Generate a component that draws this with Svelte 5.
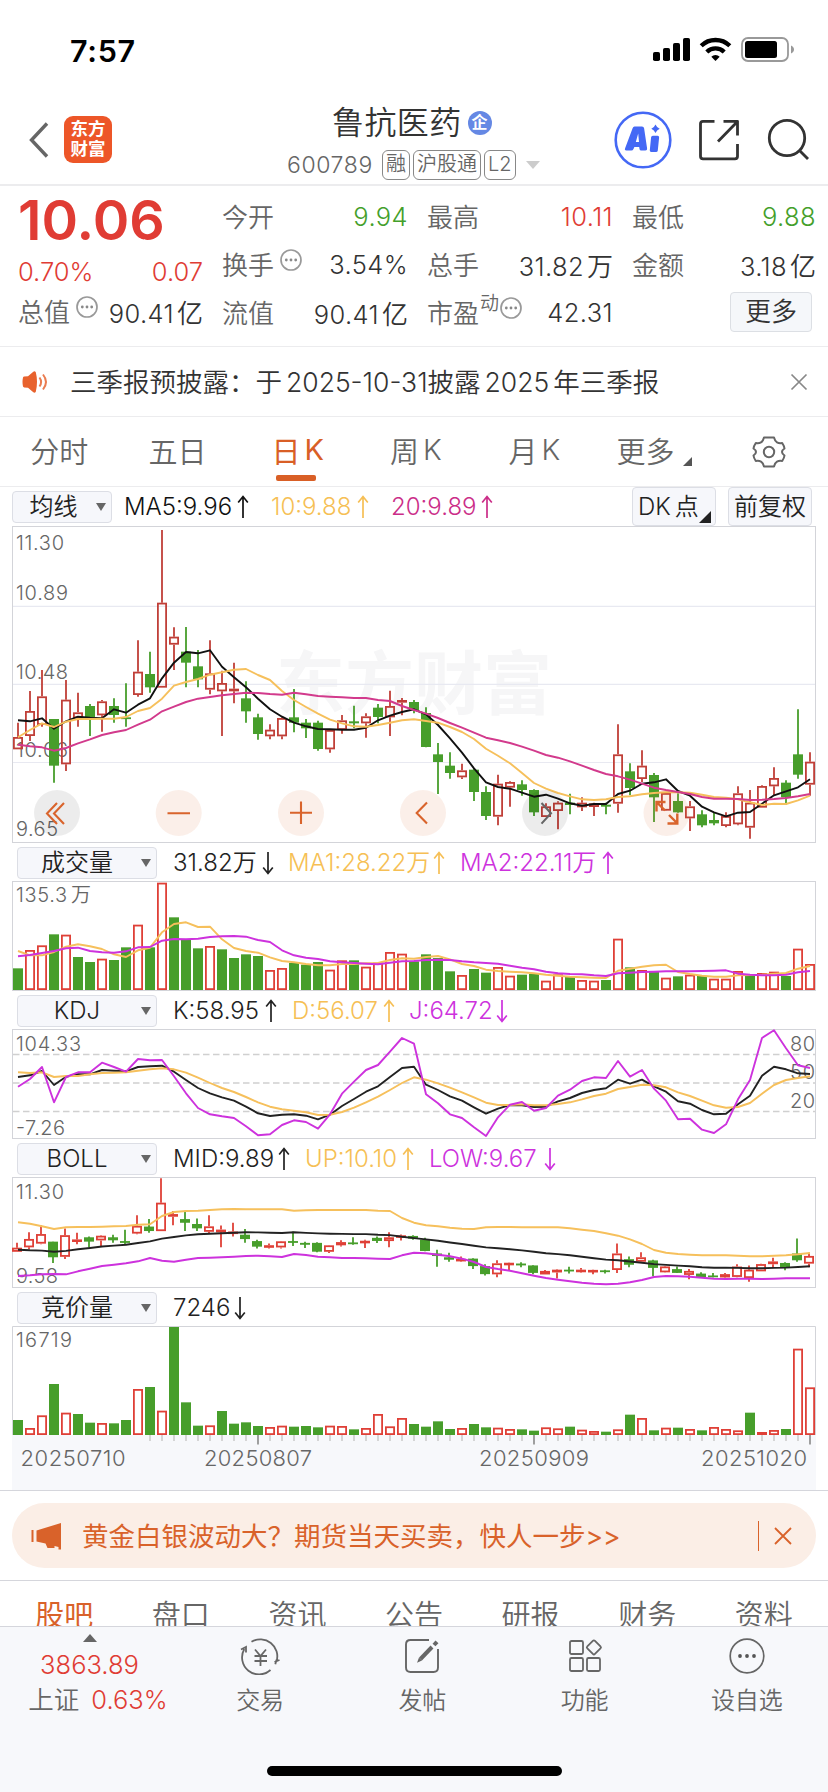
<script>
  const stats = [
    { label: '今开', value: '9.94', tone: 'down' },
    { label: '最高', value: '10.11', tone: 'up' },
    { label: '最低', value: '9.88', tone: 'down' },
    { label: '换手', value: '3.54%', info: true },
    { label: '总手', value: '31.82', unit: '万' },
    { label: '金额', value: '3.18', unit: '亿' },
    { label: '流值', value: '90.41', unit: '亿' },
    { label: '市盈', sup: '动', value: '42.31', info: true }
  ];

  const periods = ['分时', '五日', '日K', '周K', '月K', '更多'];
  const sections = ['股吧', '盘口', '资讯', '公告', '研报', '财务', '资料'];

  // w: width of the text column, gap: distance to the next reading
  const maReadings = [
    { text: 'MA5:9.96', dir: 'up', color: '#111', w: 113, gap: 22 },
    { text: '10:9.88', dir: 'up', color: '#f6bf55', w: 86, gap: 22 },
    { text: '20:9.89', dir: 'up', color: '#cb2d88', w: 90, gap: 0 }
  ];
  const volReadings = [
    { text: '31.82万', dir: 'down', color: '#222', w: 89, gap: 14 },
    { text: 'MA1:28.22万', dir: 'up', color: '#f6bf55', w: 145, gap: 15 },
    { text: 'MA2:22.11万', dir: 'up', color: '#cd32dd', w: 142, gap: 0 }
  ];
  const kdjReadings = [
    { text: 'K:58.95', dir: 'up', color: '#222', w: 92, gap: 15 },
    { text: 'D:56.07', dir: 'up', color: '#f6bf55', w: 91, gap: 14 },
    { text: 'J:64.72', dir: 'down', color: '#cd32dd', w: 87, gap: 0 }
  ];
  const bollReadings = [
    { text: 'MID:9.89', dir: 'up', color: '#222', w: 105, gap: 15 },
    { text: 'UP:10.10', dir: 'up', color: '#f6bf55', w: 97, gap: 15 },
    { text: 'LOW:9.67', dir: 'down', color: '#cd32dd', w: 115, gap: 0 }
  ];
  const aucReadings = [{ text: '7246', dir: 'down', color: '#222', w: 61, gap: 0 }];

  // direction, high, body top, body bottom, low
  const candles = `r 638 681 718 718|r 543 603 678 693|r 480 559 645 650|g 627 627 767 818|r 510 569 763 783|r 548 607 625 650|g 582 588 627 678|r 570 574 616 665|g 565 588 615 638|g 520 622 627 650|r 391 485 555 560|g 425 492 532 548|r 60 278 533 533|r 352 380 404 480|g 351 425 458 532|g 420 469 508 532|r 391 490 539 553|r 482 519 544 678|r 458 536 544 580|g 514 565 604 638|g 611 622 672 689|r 643 659 679 688|r 622 624 679 688|g 537 622 638 667|g 627 638 655 684|g 632 638 717 722|r 658 660 718 728|r 615 631 660 671|g 587 634 640 655|r 610 619 640 683|g 582 593 621 640|r 542 588 622 678|r 564 570 578 616|g 570 576 600 610|g 592 609 711 712|g 699 733 756 852|g 727 767 789 806|r 761 781 802 807|g 776 779 846 873|g 829 846 918 930|r 794 821 920 946|r 814 816 833 890|g 811 823 840 857|g 838 840 907 918|r 880 889 921 921|r 874 878 903 958|g 851 878 885 913|r 862 878 892 903|r 878 880 891 918|g 878 884 890 913|r 643 733 881 908|g 760 784 834 856|r 721 767 807 816|g 789 795 862 936|r 846 849 902 903|g 850 873 907 908|r 873 889 925 963|g 901 913 946 952|g 908 930 940 946|r 907 918 948 952|r 829 850 943 946|r 840 878 953 986|r 826 828 893 893|r 772 804 829 857|g 811 818 862 884|g 598 733 794 806|r 727 755 824 857`
    .split('|')
    .map((row) => {
      const [k, ...n] = row.split(' ');
      return { up: k === 'r', v: n.map(Number) };
    });

  const ma5 = [631,634,625,656,634,620,623,625,598,608,584,565,505,458,426,430,421,470,502,532,566,598,620,638,649,657,658,659,659,653,631,617,606,598,613,645,685,728,775,817,831,836,848,860,854,866,880,887,882,882,852,842,821,817,808,843,857,890,907,919,908,906,881,856,844,832,808];
  const ma10 = [682,660,640,651,635,627,627,626,626,621,603,594,566,527,516,507,494,487,479,477,495,510,543,570,591,611,629,640,649,650,645,638,631,628,633,638,651,666,687,716,737,760,789,819,836,849,859,868,870,868,861,859,853,849,847,847,848,854,861,863,868,877,885,881,882,871,857];
  const ma20 = [704,709,712,722,714,700,688,675,667,660,644,629,604,590,576,566,561,556,552,548,549,552,554,548,553,558,560,562,564,564,570,573,588,600,611,624,639,653,668,683,691,699,710,722,735,743,754,767,780,792,799,809,821,833,840,846,852,861,866,866,867,870,869,867,864,859,852];

  const parseBars = (s) => s.split(' ').map((t) => ({ up: t[0] === 'r', v: +t.slice(1) }));
  const volume = parseBars('g385 r330 r316 g283 r284 g351 g366 r356 g360 g322 r254 g322 r128 g232 g298 g325 r318 g328 g354 g343 g348 r390 r384 g369 g374 g366 r389 r361 g361 r380 r368 r336 r341 g364 g343 g354 g394 r405 g387 g398 r381 r407 g404 g402 r422 r403 g409 r420 r422 g420 r296 g382 r390 g396 r413 g409 r404 g408 r416 r416 r393 g404 r399 r395 g408 r326 r372');
  const auction = parseBars('g840 r864 r826 g732 r818 g822 g848 r849 g850 g840 r747 g741 r812 g561 g787 g857 r856 g813 g851 g847 g858 r861 r857 g860 g858 g862 r857 r858 g868 r864 r822 r859 r834 g852 g860 g844 g867 r864 g852 g862 r863 r867 g868 g872 r862 r865 g860 r869 r873 g875 r868 g824 r834 g871 r863 g863 r867 g871 r861 r867 r871 g818 r876 r870 g867 r626 r742');
  const vma1 = [333,346,346,336,320,313,319,327,343,351,331,323,277,252,247,261,260,298,324,333,338,352,363,367,372,376,376,372,372,370,369,360,355,356,351,348,358,372,378,389,393,395,397,400,404,407,410,412,413,414,392,386,380,376,374,396,402,407,410,410,406,405,404,401,399,386,378];
  const vma2 = [349,345,339,333,325,323,333,337,338,334,322,321,302,297,298,296,291,289,288,290,300,306,331,346,353,357,364,367,369,371,373,368,364,363,360,359,360,364,367,369,371,377,383,388,395,400,402,403,406,408,400,398,396,395,394,394,394,393,392,391,401,404,406,406,404,397,393];

  const kLine = [711,706,693,735,710,703,703,690,692,694,681,679,677,695,720,744,760,772,782,800,820,828,824,823,827,838,824,798,777,755,739,711,684,680,734,750,769,782,802,821,806,795,796,801,800,784,774,759,750,745,719,731,719,739,755,784,791,810,823,821,793,767,707,680,688,700,702];
  const dLine = [697,699,697,711,708,708,703,699,698,697,692,688,685,688,698,713,729,744,756,771,787,800,808,812,817,825,824,816,803,787,770,750,729,712,719,730,743,757,772,788,795,795,793,796,796,792,787,778,768,761,747,741,734,736,742,757,768,782,796,803,801,789,761,735,720,714,709];
  const jLine = [740,717,681,787,711,697,697,668,681,695,657,661,660,709,760,804,823,829,834,859,886,883,855,841,846,866,823,761,725,690,675,635,594,611,763,790,823,834,862,888,832,794,786,812,804,767,749,723,712,714,663,710,690,746,782,838,836,869,879,853,778,720,594,571,625,676,684];

  const bollUp = [247,251,259,267,262,261,261,260,259,258,254,253,228,216,213,212,210,208,207,208,208,208,208,212,211,210,210,210,210,210,212,213,234,248,256,259,263,266,267,262,261,261,262,262,262,262,265,269,273,280,287,298,312,330,338,342,344,346,346,346,347,349,349,347,346,343,339];
  const bollLow = [408,406,403,402,403,394,386,378,374,370,364,354,362,365,359,354,353,352,350,348,347,349,351,342,345,350,352,354,354,355,356,357,346,338,340,344,349,356,366,381,387,392,400,407,414,419,424,428,431,433,431,427,420,411,408,409,410,413,416,417,416,416,417,416,415,415,415];

  const cx = (i) => 18 + 12 * i;
  const toBoll = (v) => 188 + (v - 278) * 0.335;
  const line = (arr, off) => arr.map((v, i) => `${cx(i)},${(off + v / 3).toFixed(1)}`).join(' ');
  const bollMid = ma20.map((v) => toBoll(v) - 1.5);
  const bollCandles = candles.map((c) => ({ up: c.up, v: c.v.map(toBoll) }));
  const priceLabels = [['11.30', 549.5], ['10.89', 599.5], ['10.48', 678.5], ['10.06', 757], ['9.65', 836]];
</script>

{#snippet dots()}
  <svg class="dots" width="22" height="22" viewBox="0 0 22 22">
    <circle cx="11" cy="11" r="10" fill="none" stroke="#999" stroke-width="1.7" />
    <g fill="#888"><circle cx="6.3" cy="11" r="1.4" /><circle cx="11" cy="11" r="1.4" /><circle cx="15.7" cy="11" r="1.4" /></g>
  </svg>
{/snippet}

{#snippet readings(list)}
  {#each list as r}
    <span class="reading" style="color:{r.color};margin-right:{r.gap}px">
      <span class="rtext" style="width:{r.w}px">{r.text}</span>
      <svg width="12" height="24" viewBox="0 0 12 24" fill="none" stroke="currentColor" stroke-width="1.7">
        {#if r.dir === 'up'}
          <path d="M6 23V1.5M1.2 7.5 6 1.5l4.800 6" />
        {:else}
          <path d="M6 1v21.500M1.200 16.500 6 22.500l4.800-6" />
        {/if}
      </svg>
    </span>
  {/each}
{/snippet}

{#snippet indicatorBar(name, list)}
  <div class="indbar">
    <div class="select wide"><span>{name}</span><i></i></div>
    {@render readings(list)}
  </div>
{/snippet}

{#snippet candleSet(list, off, dx, up)}
  {#each list as c, i}
    {@const x = cx(i) + dx}
    {@const y = c.v.map((n) => off + n / 3)}
    {#if c.up}
      <path d="M{x} {y[0]}V{y[1]}M{x} {y[2]}V{y[3]}" stroke={up} stroke-width="1.8" fill="none" />
      <rect x={x - 4.1} y={y[1] + 0.9} width="8.2" height={Math.max(0.8, y[2] - y[1] - 1.8)} fill="none" stroke={up} stroke-width="1.8" />
    {:else}
      <path d="M{x} {y[0]}V{y[3]}" stroke="#479e2b" stroke-width="1.8" />
      <rect x={x - 5} y={y[1]} width="10" height={Math.max(1.8, y[2] - y[1])} fill="#479e2b" />
    {/if}
  {/each}
{/snippet}

{#snippet barSet(list, off, base)}
  {#each list as b, i}
    {@const y = off + b.v / 3}
    {#if b.up}
      <rect x={cx(i) - 4.1} y={y + 0.9} width="8.2" height={Math.max(0.8, base - y - 1.8)} fill="#fff" stroke="#df4037" stroke-width="1.8" />
    {:else}
      <rect x={cx(i) - 5} {y} width="10" height={base - y} fill="#479e2b" />
    {/if}
  {/each}
{/snippet}

<div class="screen">
  <div class="status">
    <span class="clock">7:57</span>
    <svg width="144" height="26" viewBox="652 37 144 26">
      <g>
        <rect x="653" y="52" width="7" height="9" rx="1.800" /><rect x="663" y="48" width="7" height="13" rx="1.800" />
        <rect x="673" y="43" width="7" height="18" rx="1.800" /><rect x="683" y="38" width="7" height="23" rx="1.800" />
      </g>
      <g fill="none" stroke="#000" stroke-width="4.300">
        <path d="M701.200 45.800a20.500 20.500 0 0 1 28.600 0" />
        <path d="M706.800 52a12.400 12.400 0 0 1 17.400 0" />
      </g>
      <path d="M715.500 61l-4.200-4.300a6 6 0 0 1 8.400 0z" />
      <rect x="742" y="38" width="46" height="23" rx="6" fill="none" stroke="#999" stroke-width="1.800" />
      <rect x="745" y="41" width="32" height="17" rx="2.500" />
      <path d="M791 45.500c4 1.500 4 6.500 0 8z" fill="#999" />
    </svg>
  </div>

  <header>
    <svg class="back" width="20" height="36" viewBox="0 0 20 36"><path d="M18 1.500 2.500 18 18 34.500" fill="none" stroke="#666" stroke-width="3.400" /></svg>
    <div class="logo"><span>东方</span><span>财富</span></div>
    <div class="title">
      <div class="name">鲁抗医药<b>企</b></div>
      <div class="code"><span>600789</span><em>融</em><em>沪股通</em><em>L2</em><i></i></div>
    </div>
    <svg class="tools" width="198" height="60" viewBox="612 110 198 60">
      <circle cx="642" cy="140" r="27.300" fill="none" stroke="#4468f5" stroke-width="2.600" />
      <path fill="#4468f5" fill-rule="evenodd" d="M633.500 126.500h7.500q1.800 0 2.100 1.800l3 20.200q.3 2-1.700 2h-4.200q-1.500 0-1.700-1.500l-.3-2h-4.800l-.9 2q-.7 1.500-2.200 1.500h-4.800q-2.300 0-1.400-2.200l7.500-20q.6-1.800 1.900-1.800zM637.200 133.500l-2.400 8.500h3.200z" />
      <path fill="#4468f5" d="M651.800 135.700h4.800q1.700 0 1.500 1.700l-1.300 13q-.2 1.600-1.800 1.600h-4.700q-1.700 0-1.500-1.700l1.300-13q.2-1.600 1.700-1.600zM654.500 124.500q1.200 3 4.200 4.200q-3 1.200-4.200 4.200q-1.200-3-4.200-4.200q3-1.200 4.200-4.200z" />
      <g fill="none" stroke="#333" stroke-width="2.800">
        <path d="M713.500 121.300h-11.500q-2.500 0-2.500 2.500v32.500q0 2.500 2.500 2.500h32q2.500 0 2.500-2.500V144" />
        <path d="M722.500 121.300h14V135.500M736 122 717 141.500" stroke-linejoin="round" />
        <circle cx="786" cy="138" r="17.700" />
        <path d="M798.500 150.500 807 159" />
      </g>
    </svg>
  </header>

  <section class="quote">
    <div class="main">
      <div class="price">10.06</div>
      <div class="chg"><span>0.70%</span><span>0.07</span></div>
      <div class="stat"><label>总值</label>{@render dots()}<span class="val">90.41<u>亿</u></span></div>
    </div>
    <div class="grid">
      {#each stats as s}
        <div class="stat">
          <label>{s.label}</label>{#if s.sup}<sup>{s.sup}</sup>{/if}{#if s.info}{@render dots()}{/if}
          <span class="val {s.tone ?? ''}">{s.value}{#if s.unit}<u>{s.unit}</u>{/if}</span>
        </div>
      {/each}
      <div class="stat"><button class="more">更多</button></div>
    </div>
  </section>

  <section class="notice">
    <svg width="26" height="22" viewBox="0 0 26 22">
      <path d="M1 6.500q.3-.8 1.200-.9L6 5.300 11.300.7q1.600-1 2.500.6c1.600 6 1.600 13 0 19.400q-.9 1.600-2.500.6L6 16.700l-3.800-.3q-.9-.1-1.200-.9-1-4.500 0-9z" fill="#e8622d" />
      <path d="M17.500 6.500q3.200 4.500 0 9M21 3.500q6 7.500 0 15" fill="none" stroke="#ea7c50" stroke-width="2" />
    </svg>
    <p>三季报预披露：于<s></s>2025-10-31披露<s></s>2025<s></s>年三季报</p>
    <svg width="18" height="18" viewBox="0 0 18 18"><path d="M1.500 1.500l15 15M16.500 1.500l-15 15" stroke="#888" stroke-width="1.700" /></svg>
  </section>

  <nav class="periods">
    {#each periods as p}
      <div class:active={p === '日K'} class:menu={p === '更多'} class:latin={p.endsWith('K')}>
        {#if p.endsWith('K')}{p[0]}<s></s>K{:else}{p}{/if}
      </div>
    {/each}
    <div class="gear">
      <svg width="34" height="32" viewBox="0 0 34 32" fill="none" stroke="#666" stroke-width="2" stroke-linejoin="round">
        <path d="M12 1.500h10q1 3.800 3 4.900t5.200.6q2 3 2.300 5.500q-2.500 1.600-2.500 3.500t2.500 3.500q-.3 2.500-2.300 5.500q-3.200-.5-5.200.6t-3 4.900h-10q-1-3.800-3-4.900t-5.200-.6q-2-3-2.300-5.500q2.500-1.600 2.500-3.500t-2.500-3.500q.3-2.500 2.300-5.500q3.200.5 5.200-.6t3-4.900z" />
        <circle cx="17" cy="16" r="5.200" />
      </svg>
    </div>
  </nav>

  <div class="mabar">
    <div class="select"><span>均线</span><i></i></div>
    {@render readings(maReadings)}
    <button class="adj dk">DK<s></s>点</button>
    <button class="adj">前复权</button>
  </div>

  <svg class="panel" width="828" height="317" viewBox="0 526 828 317">
    <g class="mark"><text x="276" y="709" textLength="276">东方财富</text></g>
    <path d="M13 606.300H815M13 684.300H815M13 762.500H815" stroke="#e8e9f1" stroke-width="1.200" />
    <rect x="12.500" y="526.500" width="803" height="316" fill="none" stroke="#d3d4d9" />
    <g class="axis">
      {#each priceLabels as [t, y]}<text x="16" {y} textLength={t === '11.30' ? 48 : t === '9.65' ? 42 : 52}>{t}</text>{/each}
    </g>
    {@render candleSet(candles, 510, 0, '#c03f38')}
    <g fill="none" stroke-width="1.900" stroke-linejoin="round">
      <polyline points={line(ma5, 510)} stroke="#111" />
      <polyline points={line(ma10, 510)} stroke="#f6c05c" />
      <polyline points={line(ma20, 510)} stroke="#d23a8c" />
    </g>
    <g fill="#000" fill-opacity=".075"><circle cx="57" cy="813" r="23" /><circle cx="545" cy="813" r="23" /></g>
    <g fill="#db6a34" fill-opacity=".11">
      <circle cx="178.700" cy="813" r="23" /><circle cx="301" cy="813" r="23" /><circle cx="423" cy="813" r="23" /><circle cx="666.500" cy="813" r="23" />
    </g>
    <g fill="none" stroke="#d9642c" stroke-width="2.100">
      <path d="M57 803l-10 10.500 10 10.500M64 803l-10 10.500 10 10.500" />
      <path d="M167.500 813.300h22.500M290 812.700h22M301 801.500v22.500M427 802.500l-10.300 10.500 10.300 10.500" />
      <path d="M665 810.500l-8.500-8.500M656.500 811.500v-9.500h9M669 815l8 8M667.500 823.500h9.800v-10" stroke-width="2.400" />
    </g>
    <path d="M541.500 803l9.500 10.300-9.500 10.300" fill="none" stroke="#666" stroke-width="2.100" />
  </svg>

  {@render indicatorBar('成交量', volReadings)}
  <svg class="panel" width="828" height="110" viewBox="0 881 828 110">
    <rect x="12.500" y="881.500" width="803" height="109" fill="none" stroke="#d3d4d9" />
    <g class="axis"><text x="16" y="902" textLength="51">135.3</text><text x="71" y="902" textLength="19">万</text></g>
    {@render barSet(volume, 840, 990)}
    <g fill="none" stroke-width="1.900" stroke-linejoin="round">
      <polyline points={line(vma1, 840)} stroke="#f6c05c" />
      <polyline points={line(vma2, 840)} stroke="#cd32dd" />
    </g>
  </svg>

  {@render indicatorBar('KDJ', kdjReadings)}
  <svg class="panel" width="828" height="110" viewBox="0 1029 828 110">
    <rect x="12.500" y="1029.500" width="803" height="109" fill="none" stroke="#d3d4d9" />
    <path d="M13 1054.500H815M13 1083H815M13 1111.500H815" stroke="#d0d0d0" stroke-width="1.700" stroke-dasharray="6.500 3.500" />
    <g class="axis">
      <text x="16" y="1050.500" textLength="65">104.33</text><text x="16" y="1134.500" textLength="49">-7.26</text>
      <text x="790" y="1050.500" textLength="25">80</text><text x="790" y="1079" textLength="25">50</text><text x="790" y="1107.500" textLength="25">20</text>
    </g>
    <g fill="none" stroke-width="1.900" stroke-linejoin="round">
      <polyline points={line(kLine, 840)} stroke="#222" />
      <polyline points={line(dLine, 840)} stroke="#f6c05c" />
      <polyline points={line(jLine, 840)} stroke="#cd32dd" />
    </g>
  </svg>

  {@render indicatorBar('BOLL', bollReadings)}
  <svg class="panel" width="828" height="111" viewBox="0 1177 828 111">
    <rect x="12.500" y="1177.500" width="803" height="110" fill="none" stroke="#d3d4d9" />
    <g class="axis"><text x="16" y="1199" textLength="48">11.30</text><text x="16" y="1283" textLength="42">9.58</text></g>
    {@render candleSet(bollCandles, 1140, -1, '#df4037')}
    <g fill="none" stroke-width="1.900" stroke-linejoin="round">
      <polyline points={line(bollMid, 1140)} stroke="#222" />
      <polyline points={line(bollUp, 1140)} stroke="#f6c05c" />
      <polyline points={line(bollLow, 1140)} stroke="#cd32dd" />
    </g>
  </svg>

  {@render indicatorBar('竞价量', aucReadings)}
  <svg class="panel" width="828" height="164" viewBox="0 1326 828 164">
    <rect x="12" y="1435" width="804" height="55" fill="#f7f8fb" />
    <path d="M12.500 1435V1326.500H815.500V1435" fill="none" stroke="#d3d4d9" />
    <g class="axis"><text x="16" y="1347" textLength="56">16719</text></g>
    {@render barSet(auction, 1140, 1435)}
    {#each Array.from({ length: 56 }, (_, k) => k + 11) as i}
      {@const major = i === 20 || i === 43 || i === 66}
      <path d="M{cx(i)} 1435v{major ? 9.500 : 6}" stroke={major ? '#888' : '#ccc'} stroke-width="1.600" />
    {/each}
    <g class="axis dates">
      <text x="20.500" y="1465.500" textLength="105">20250710</text><text x="204" y="1465.500" textLength="108">20250807</text>
      <text x="479" y="1465.500" textLength="110">20250909</text><text x="701" y="1465.500" textLength="106">20251020</text>
    </g>
  </svg>

  <section class="promo">
    <div class="pill">
      <svg width="31" height="28" viewBox="0 0 31 28" fill="#d9622a">
        <rect x="0.500" y="8" width="2" height="12" /><path d="M5.500 8.500 30 1V27.500h-2.500v-2.500L23.500 24v2h-7l-2-4.500L5.500 19.500z" />
      </svg>
      <p>黄金白银波动大？期货当天买卖，快人一步&gt;&gt;</p>
      <i></i>
      <svg width="18" height="18" viewBox="0 0 18 18"><path d="M1 1l16 16M17 1L1 17" stroke="#d9622a" stroke-width="1.800" /></svg>
    </div>
  </section>

  <nav class="sections">
    {#each sections as s, i}<span class:active={i === 0}>{s}</span>{/each}
  </nav>

  <footer>
    <div class="bar">
      <div class="index"><i></i><strong>3863.89</strong><p>上证<span>0.63%</span></p></div>
      <div class="act">
        <svg width="44" height="38" viewBox="0 0 44 38" fill="none" stroke="#666" stroke-width="1.800">
          <path d="M13.500 4.800A17 17 0 0 1 38.500 24.500M36.500 25l5-2M37.300 27.200l1.200-4.500M32.500 33A17 17 0 0 1 6.300 12M3 12.500l5-2.500v5.500" />
          <path d="M17 12.500l5.500 6.500 5.500-6.500M22.500 19v10M16.500 19h12.500M16.500 24h12.500" />
        </svg>
        <span>交易</span>
      </div>
      <div class="act">
        <svg width="44" height="38" viewBox="0 0 44 38" fill="none" stroke="#666" stroke-width="1.900">
          <path d="M29 3H10.500Q6 3 6 7.500v23Q6 35 10.500 35h23Q38 35 38 30.500V12" />
          <path d="M20.500 22 32 10" stroke-width="4" /><path d="M17 25.800l2-5.200 3 3z" fill="#666" stroke="none" /><path d="M34 8l3-3.200" stroke-width="4" />
        </svg>
        <span>发帖</span>
      </div>
      <div class="act">
        <svg width="44" height="38" viewBox="0 0 44 38" fill="none" stroke="#666" stroke-width="1.800">
          <rect x="7" y="4" width="13" height="13" rx="1.500" /><rect x="7" y="21" width="13" height="13" rx="1.500" /><rect x="24" y="21" width="13" height="13" rx="1.500" />
          <rect x="25.500" y="5" width="10.800" height="10.800" rx="1.500" transform="rotate(45 30.900 10.400)" />
        </svg>
        <span>功能</span>
      </div>
      <div class="act">
        <svg width="44" height="38" viewBox="0 0 44 38">
          <circle cx="22" cy="19" r="16.800" fill="none" stroke="#666" stroke-width="1.700" />
          <g fill="#555"><circle cx="15" cy="19" r="1.900" /><circle cx="22" cy="19" r="1.900" /><circle cx="29" cy="19" r="1.900" /></g>
        </svg>
        <span>设自选</span>
      </div>
    </div>
    <div class="home"></div>
  </footer>
</div>

<style>
  :global(body) { margin: 0; background: #fff; }
  .screen {
    width: 828px; height: 1792px; overflow: hidden; display: flex; flex-direction: column;
    font-family: Inter, 'Noto Sans CJK SC', sans-serif; font-weight: 350; color: #333; background: #fff;
  }
  .screen :global(svg) { display: block; flex: none; }
  p { margin: 0; }
  s { display: inline-block; width: 4px; text-decoration: none; }
  u { text-decoration: none; margin-left: 3px; }
  button { font-family: inherit; font-weight: inherit; padding: 0; }

  .status { height: 90px; flex: none; display: flex; justify-content: space-between; box-sizing: border-box; padding: 37px 32px 0 70px; }
  .clock { font-size: 30.500px; line-height: 27px; font-weight: 600; color: #000; letter-spacing: 0.700px; }

  header { height: 94px; flex: none; border-bottom: 2px solid #ececee; display: flex; align-items: flex-start; }
  .back { margin: 32px 0 0 29px; }
  .logo { margin: 26px 0 0 15px; width: 48px; height: 47px; border-radius: 9px; background: #ed5628; color: #fff; font-weight: 700; font-size: 17.500px; line-height: 19.500px; box-sizing: border-box; padding-top: 3px; display: flex; flex-direction: column; align-items: center; }
  .title { width: 501px; display: flex; flex-direction: column; align-items: center; padding-top: 13px; box-sizing: border-box; }
  .name { display: flex; align-items: center; font-size: 32px; line-height: 40px; padding-left: 92px; align-self: flex-start; margin-left: 128px; letter-spacing: 0.400px; }
  .name b { width: 24px; height: 24px; border-radius: 50%; margin-left: 6px; background: #6588e4; color: #fff; font-size: 16px; line-height: 23px; text-align: center; letter-spacing: 0; }
  .code { display: flex; align-items: center; height: 32px; margin-top: 6px; font-size: 23px; color: #666; align-self: flex-start; margin-left: 175px; letter-spacing: 0.600px; }
  .code span { width: 95px; }
  .code em { font-style: normal; font-size: 20px; letter-spacing: 0; line-height: 27px; height: 30px; box-sizing: border-box; border: 1.500px solid #888; border-radius: 6px; padding: 0 3px; margin-right: 3px; }
  .code i { margin-left: 7px; border: 7px solid transparent; border-top: 8px solid #ccc; border-bottom: 0; }
  .tools { margin: 20px 0 0 0; }

  .quote { height: 160px; flex: none; border-bottom: 1px solid #ececee; display: flex; box-sizing: content-box; }
  .main { width: 185px; margin-left: 18px; }
  .price { font-size: 55.500px; font-weight: 600; line-height: 60px; color: #e03c34; padding-top: 4px; letter-spacing: 0; }
  .chg { display: flex; justify-content: space-between; font-size: 25.500px; line-height: 32px; height: 38px; color: #e03c34; margin-top: 6px; }
  .grid { display: grid; grid-template-columns: 186px 186px 184px; grid-template-rows: 48px 48px 48px; column-gap: 19px; margin-left: 19px; padding-top: 7px; }
  .stat { display: flex; align-items: center; height: 48px; font-size: 26px; white-space: nowrap; }
  .main .stat { height: 34px; margin-top: 1px; }
  .stat label { color: #666; margin-top: -4px; }
  .stat :global(.dots) { margin: -10px 0 0 6px; }
  .stat sup { font-size: 19px; line-height: 20px; color: #666; margin: -18px -5px 0 1px; align-self: center; vertical-align: baseline; }
  .val { margin-left: auto; margin-top: -2px; font-size: 25.500px; letter-spacing: 0.400px; }
  .val u { font-size: 26px; letter-spacing: 0; }
  .up { color: #e03c34; }
  .down { color: #449f2b; }
  .more { margin: -3px 4px 0 auto; width: 82px; height: 40px; border: 1.500px solid #dcdfe4; border-radius: 4px; background: #f5f7fa; font-size: 26px; line-height: 34px; color: #333; }

  .notice { height: 69px; flex: none; border-bottom: 1px solid #ececee; display: flex; align-items: center; padding: 0 20px 0 22px; }
  .notice p { flex: 1; margin-left: 22px; margin-top: -3px; font-size: 26.500px; color: #333; white-space: nowrap; }

  .periods { height: 69px; flex: none; border-bottom: 1px solid #ececee; display: grid; grid-template-columns: repeat(7, 1fr); font-size: 29px; color: #666; }
  .periods div { display: flex; align-items: center; justify-content: center; position: relative; padding-bottom: 4px; }
  .periods .gear { padding-bottom: 0; }
  .periods .latin { padding-left: 4px; }
  .periods .active { color: #d95f26; font-weight: 400; }
  .periods .active::after { content: ''; position: absolute; bottom: 5px; left: 50%; width: 40px; height: 6px; margin-left: -20px; border-radius: 2px; background: #d95f26; }
  .periods .menu { padding-right: 10px; }
  .periods .menu::after { content: ''; position: absolute; right: 18px; top: 40px; border-left: 9px solid transparent; border-bottom: 9px solid #555; }

  .mabar { height: 39px; flex: none; display: flex; align-items: center; padding-left: 12px; }
  .select { box-sizing: border-box; width: 100px; height: 32px; background: #f6f7fb; border: 1.500px solid #dcdee5; border-radius: 4px; display: flex; align-items: center; font-size: 24px; color: #222; }
  .select span { flex: 1; text-align: center; padding-right: 2px; line-height: 28px; }
  .select i { border: 5px solid transparent; border-top: 8px solid #666; border-bottom: 0; margin-right: 5px; }
  .mabar .select { margin-right: 12px; }
  .reading { display: flex; align-items: center; font-size: 24px; line-height: 30px; }
  .rtext { white-space: nowrap; }
  .adj { box-sizing: border-box; width: 84px; height: 39px; border: 1.500px solid #dcdee5; border-radius: 4px; background: #f6f7fb; color: #222; font-size: 24px; line-height: 34px; margin-right: 12px; white-space: nowrap; }
  .dk { margin-left: auto; text-align: left; padding-left: 5px; position: relative; }
  .dk::after { content: ''; position: absolute; right: 4px; bottom: 2px; border-left: 12px solid transparent; border-bottom: 12px solid #222; }
  .mabar .adj:last-child { margin-right: 16px; }
  .indbar { height: 38px; flex: none; display: flex; align-items: center; padding: 2px 0 0 17px; box-sizing: border-box; }
  .select.wide { width: 140px; margin-right: 16px; }
  .select.wide span { padding-right: 5px; }

  .axis { font-size: 20px; fill: #666; }
  .dates { font-size: 22px; }
  .mark { font-size: 69px; font-weight: 700; fill: #f6f6f7; }

  .promo { height: 77px; flex: none; border-top: 1px solid #d5d6dc; border-bottom: 1px solid #d5d6dc; padding: 12px 12px 0; box-sizing: content-box; }
  .pill { height: 65px; border-radius: 33px; background: #fbeee6; display: flex; align-items: center; padding: 0 24px 0 19px; color: #d9622a; }
  .pill p { flex: 1; margin-left: 20px; margin-top: -3px; font-size: 26.500px; font-weight: 400; white-space: nowrap; }
  .pill i { width: 1.500px; height: 30px; background: #d9622a; margin-right: 15px; }

  .sections { height: 45px; flex: none; overflow: hidden; display: flex; padding: 15px 6px 0; font-size: 29px; line-height: 40px; color: #666; box-sizing: border-box; }
  .sections span { flex: 1; text-align: center; }
  .sections .active { color: #d9622a; font-weight: 400; }

  footer { flex: 1; background: #f7f8fb; border-top: 1px solid #d5d6dc; }
  .bar { display: flex; height: 139px; }
  .index { width: 179px; display: flex; flex-direction: column; align-items: center; padding-top: 7px; box-sizing: border-box; color: #e03c34; }
  .index i { border: 7px solid transparent; border-bottom: 8px solid #666; border-top: 0; }
  .index strong { font-weight: inherit; font-size: 25.500px; line-height: 30px; margin-top: 8px; }
  .index p { display: flex; gap: 12px; font-size: 25.500px; line-height: 34px; margin-top: 3px; color: #666; padding-left: 17px; }
  .index p span { color: #e03c34; }
  .act { flex: 1; display: flex; flex-direction: column; align-items: center; padding-top: 10px; box-sizing: border-box; font-size: 24px; color: #666; }
  .act span { line-height: 34px; margin-top: 9px; }
  .home { width: 295px; height: 10px; border-radius: 5px; background: #000; margin: 0 auto; }
</style>
